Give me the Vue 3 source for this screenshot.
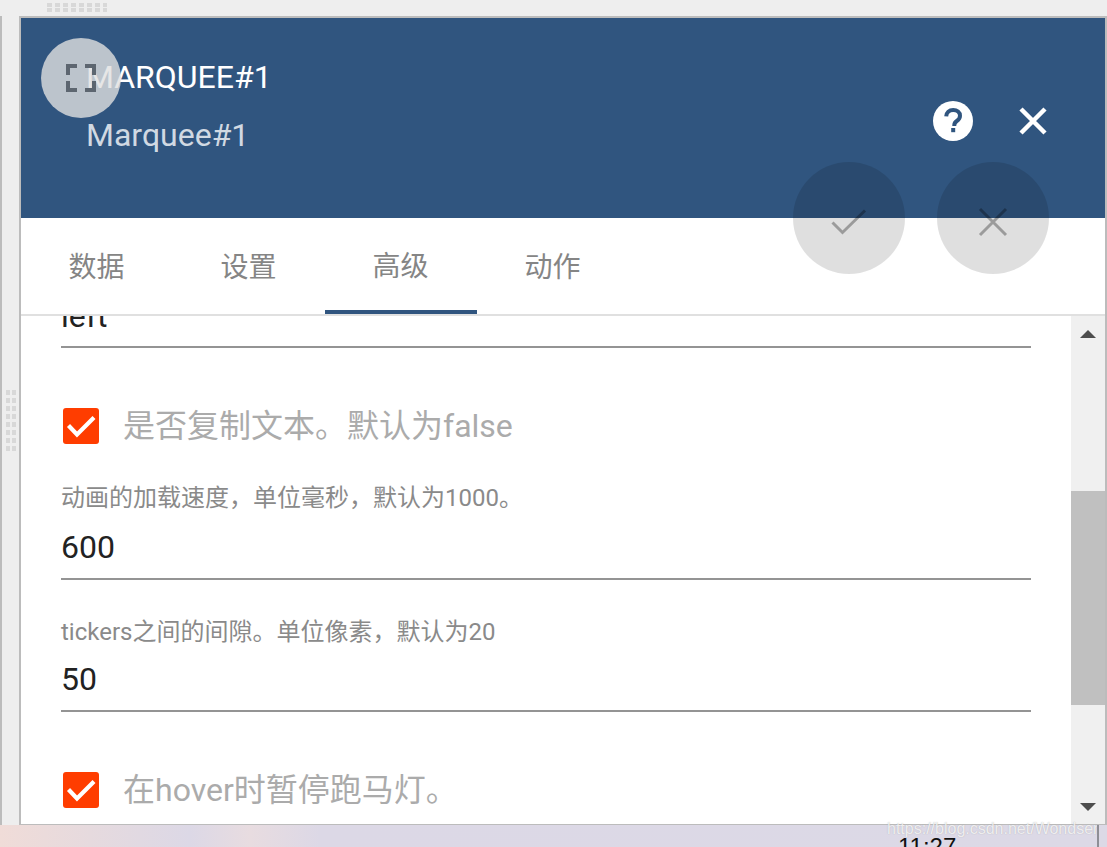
<template>
  <div class="page">
    <div class="handle-top"></div>
    <div class="workspace">
      <div class="side">
        <div class="handle-left"></div>
      </div>
      <div class="dialog">
        <header class="head">
          <div class="titles">
            <div class="title">MARQUEE#1</div>
            <div class="subtitle">Marquee#1</div>
          </div>
          <div class="head-icons">
            <svg class="help" viewBox="0 0 40 40" width="40" height="40">
              <circle cx="20" cy="20" r="20" fill="#fff" />
              <path d="M13.2 15.4c.2-4 3-6.500 7-6.500 3.900 0 6.800 2.400 6.800 5.800 0 2.600-1.300 4-3.200 5.300-1.800 1.200-2.500 2.200-2.500 4.200v.8" fill="none" stroke="#30557f" stroke-width="4" />
              <rect x="18.200" y="27" width="4" height="4.200" fill="#30557f" />
            </svg>
            <svg class="close" viewBox="0 0 30 30" width="30" height="30">
              <path d="M3 3l24 24M27 3L3 27" stroke="#fff" stroke-width="4.500" fill="none" />
            </svg>
          </div>
        </header>

        <nav class="tabs">
          <div v-for="t in tabs" :key="t" class="tab" :class="{ active: t === '高级' }">{{ t }}</div>
        </nav>

        <div class="body">
          <div class="scroll-area">
            <div class="form">
              <div class="field first">
                <div class="value">left</div>
              </div>
              <div class="check-row first-check">
                <span class="box"><svg viewBox="0 0 36 36" width="36" height="36"><path d="M5.500 17.500l8.500 9L31 9.500" fill="none" stroke="#fff" stroke-width="4.200" /></svg></span>
                <span class="check-label">是否复制文本。默认为false</span>
              </div>
              <div class="field labelled speed">
                <label>动画的加载速度，单位毫秒，默认为1000。</label>
                <div class="value">600</div>
              </div>
              <div class="field labelled gap">
                <label>tickers之间的间隙。单位像素，默认为20</label>
                <div class="value">50</div>
              </div>
              <div class="check-row last-check">
                <span class="box"><svg viewBox="0 0 36 36" width="36" height="36"><path d="M5.500 17.500l8.500 9L31 9.500" fill="none" stroke="#fff" stroke-width="4.200" /></svg></span>
                <span class="check-label">在hover时暂停跑马灯。</span>
              </div>
            </div>
          </div>
          <div class="scrollbar">
            <div class="arrow up"></div>
            <div class="track"><div class="thumb"></div></div>
            <div class="arrow down"></div>
          </div>
        </div>

        <!-- floating buttons sit over header and tabs -->
        <div class="fab fab-ok">
          <svg viewBox="0 0 36 26" width="36" height="26"><path d="M1.500 13.500l10 10L34 1.500" fill="none" stroke="#000" stroke-opacity=".3" stroke-width="3" /></svg>
        </div>
        <div class="fab fab-cancel">
          <svg viewBox="0 0 30 30" width="30" height="30"><path d="M2 2l26 26M28 2L2 28" fill="none" stroke="#000" stroke-opacity=".3" stroke-width="3" /></svg>
        </div>
        <div class="expand">
          <svg viewBox="0 0 30 30" width="30" height="30">
            <path d="M11 3H2V12M19 3h9V12M11 27H2V18M19 27h9V18" fill="none" stroke="#5d6670" stroke-width="4" />
          </svg>
        </div>
      </div>
    </div>
    <footer class="strip">
      <span class="clock">11:27</span>
      <span class="mark">https://blog.csdn.net/Wondser</span>
    </footer>
  </div>
</template>

<script setup>
const tabs = ['数据', '设置', '高级', '动作']
</script>

<style>
html, body { margin: 0; padding: 0; overflow: hidden; }
</style>

<style scoped>
.page {
  width: 1107px;
  height: 847px;
  display: flex;
  flex-direction: column;
  background: #eeeeee;
  font-family: Roboto, "Noto Sans CJK SC", sans-serif;
  overflow: hidden;
}

/* drag handles: dot grid made of a colour gradient and a band mask */
.handle-top {
  height: 10px;
  flex: none;
  margin: 3px 0 3px 47px;
  width: 60px;
  background-image: linear-gradient(90deg, #d8d8d8 5px, transparent 5px);
  background-size: 8px 100%;
  mask-image: linear-gradient(#000 4px, transparent 4px);
  mask-size: 100% 5px;
}

.workspace { flex: 1; display: flex; min-height: 0; }

.side {
  width: 17px;
  flex: none;
  border-left: 2px solid #bcbcbc;
  display: flex;
  align-items: center;
  justify-content: center;
}
.handle-left {
  width: 10px;
  height: 62px;
  margin-left: 1px;
  background-image: linear-gradient(#d8d8d8 5px, transparent 5px);
  background-size: 100% 8px;
  mask-image: linear-gradient(90deg, #000 4px, transparent 4px, transparent 6px, #000 6px);
}

.dialog {
  position: relative;
  flex: 1;
  display: flex;
  flex-direction: column;
  background: #fff;
  border: 2px solid #bcbcbc;
  border-bottom-width: 1px;
  min-width: 0;
}

.head {
  height: 200px;
  flex: none;
  background: #30557f;
  display: flex;
  justify-content: space-between;
  align-items: flex-start;
  color: #fff;
  padding: 37px 57px 0 65px;
  box-sizing: border-box;
}
.title { font-size: 32px; line-height: 44px; white-space: nowrap; }
.subtitle { font-size: 32px; line-height: 44px; margin-top: 14px; color: rgba(255, 255, 255, .78); white-space: nowrap; }

.head-icons { display: flex; align-items: center; gap: 45px; margin-top: 46px; }
.help, .close { display: block; }

.tabs {
  height: 96px;
  flex: none;
  display: flex;
  border-bottom: 2px solid #e0e0e0;
}
.tab {
  width: 152px;
  display: flex;
  align-items: center;
  justify-content: center;
  font-size: 28px;
  color: #858585;
  box-sizing: border-box;
  padding-bottom: 2px;
  padding-right: 1px;
}
.tab.active { border-bottom: 4px solid #30557f; padding-bottom: 0; }

.body { flex: 1; display: flex; min-height: 0; }
.scroll-area { flex: 1; overflow: hidden; min-width: 0; }
.form { padding: 0 40px; margin-top: -22px; }

.field { border-bottom: 2px solid #949494; box-sizing: border-box; }
.field.first { height: 54px; }
.field label {
  display: block;
  font-size: 24px;
  line-height: 32px;
  color: #8a8a8a;
  white-space: nowrap;
}
.value {
  font-size: 32px;
  line-height: 48px;
  color: #222;
}
.field.first .value { line-height: 44px; }
.speed { height: 98px; }
.speed .value { margin-top: 9px; }
.gap { height: 96px; margin-top: 36px; }
.gap .value { margin-top: 7px; }

.check-row { display: flex; align-items: center; gap: 24px; padding-left: 2px; height: 36px; }
.first-check { margin-top: 60px; margin-bottom: 38px; }
.last-check { margin-top: 60px; }
.box {
  width: 36px;
  height: 36px;
  flex: none;
  background: #ff3d00;
  border-radius: 3px;
}
.box svg { display: block; }
.check-label { font-size: 32px; color: #ababab; white-space: nowrap; line-height: 44px; }

.scrollbar {
  width: 34px;
  flex: none;
  background: #f0f0f0;
  display: flex;
  flex-direction: column;
}
.arrow {
  height: 34px;
  flex: none;
  display: flex;
  align-items: center;
  justify-content: center;
  box-sizing: border-box;
}
.arrow.up { padding-top: 2px; }
.arrow::before { content: ""; border-left: 8px solid transparent; border-right: 8px solid transparent; }
.arrow.up::before { border-bottom: 8px solid #4d4d4d; }
.arrow.down::before { border-top: 8px solid #4d4d4d; }
.track { flex: 1; padding-top: 141px; }
.thumb { height: 214px; background: #c0c0c0; }

.fab {
  position: absolute;
  width: 112px;
  height: 112px;
  border-radius: 50%;
  background: rgba(0, 0, 0, .125);
  display: flex;
  align-items: center;
  justify-content: center;
  top: 144px;
}
.fab svg { margin-top: 8px; }
.fab-ok { left: 772px; }
.fab-cancel { left: 916px; }

.expand {
  position: absolute;
  left: 20px;
  top: 20px;
  width: 80px;
  height: 80px;
  border-radius: 50%;
  background: rgba(224, 224, 224, .8);
  display: flex;
  align-items: center;
  justify-content: center;
}

.strip {
  position: relative;
  height: 22px;
  flex: none;
  background: linear-gradient(90deg, #f0dcd8 0, #e6dade 90px, #dcd8e6 190px, #e8dce0 250px, #dcd8e6 320px, #dcd9e6 100%);
}
.strip::after {
  content: "";
  position: absolute;
  left: 1097px;
  top: 0;
  bottom: 0;
  width: 2px;
  background: #8e8e96;
}
.clock {
  position: absolute;
  left: 898px;
  top: 8px;
  font-family: "Liberation Sans", sans-serif;
  font-size: 24px;
  line-height: 28px;
  color: #111;
}
.mark {
  position: absolute;
  left: 887px;
  top: -6px;
  font-family: "Liberation Sans", sans-serif;
  font-size: 16px;
  line-height: 20px;
  color: rgba(255, 255, 255, .8);
  text-shadow: 0 0 1px rgba(120, 120, 120, .5);
  white-space: nowrap;
}
</style>
